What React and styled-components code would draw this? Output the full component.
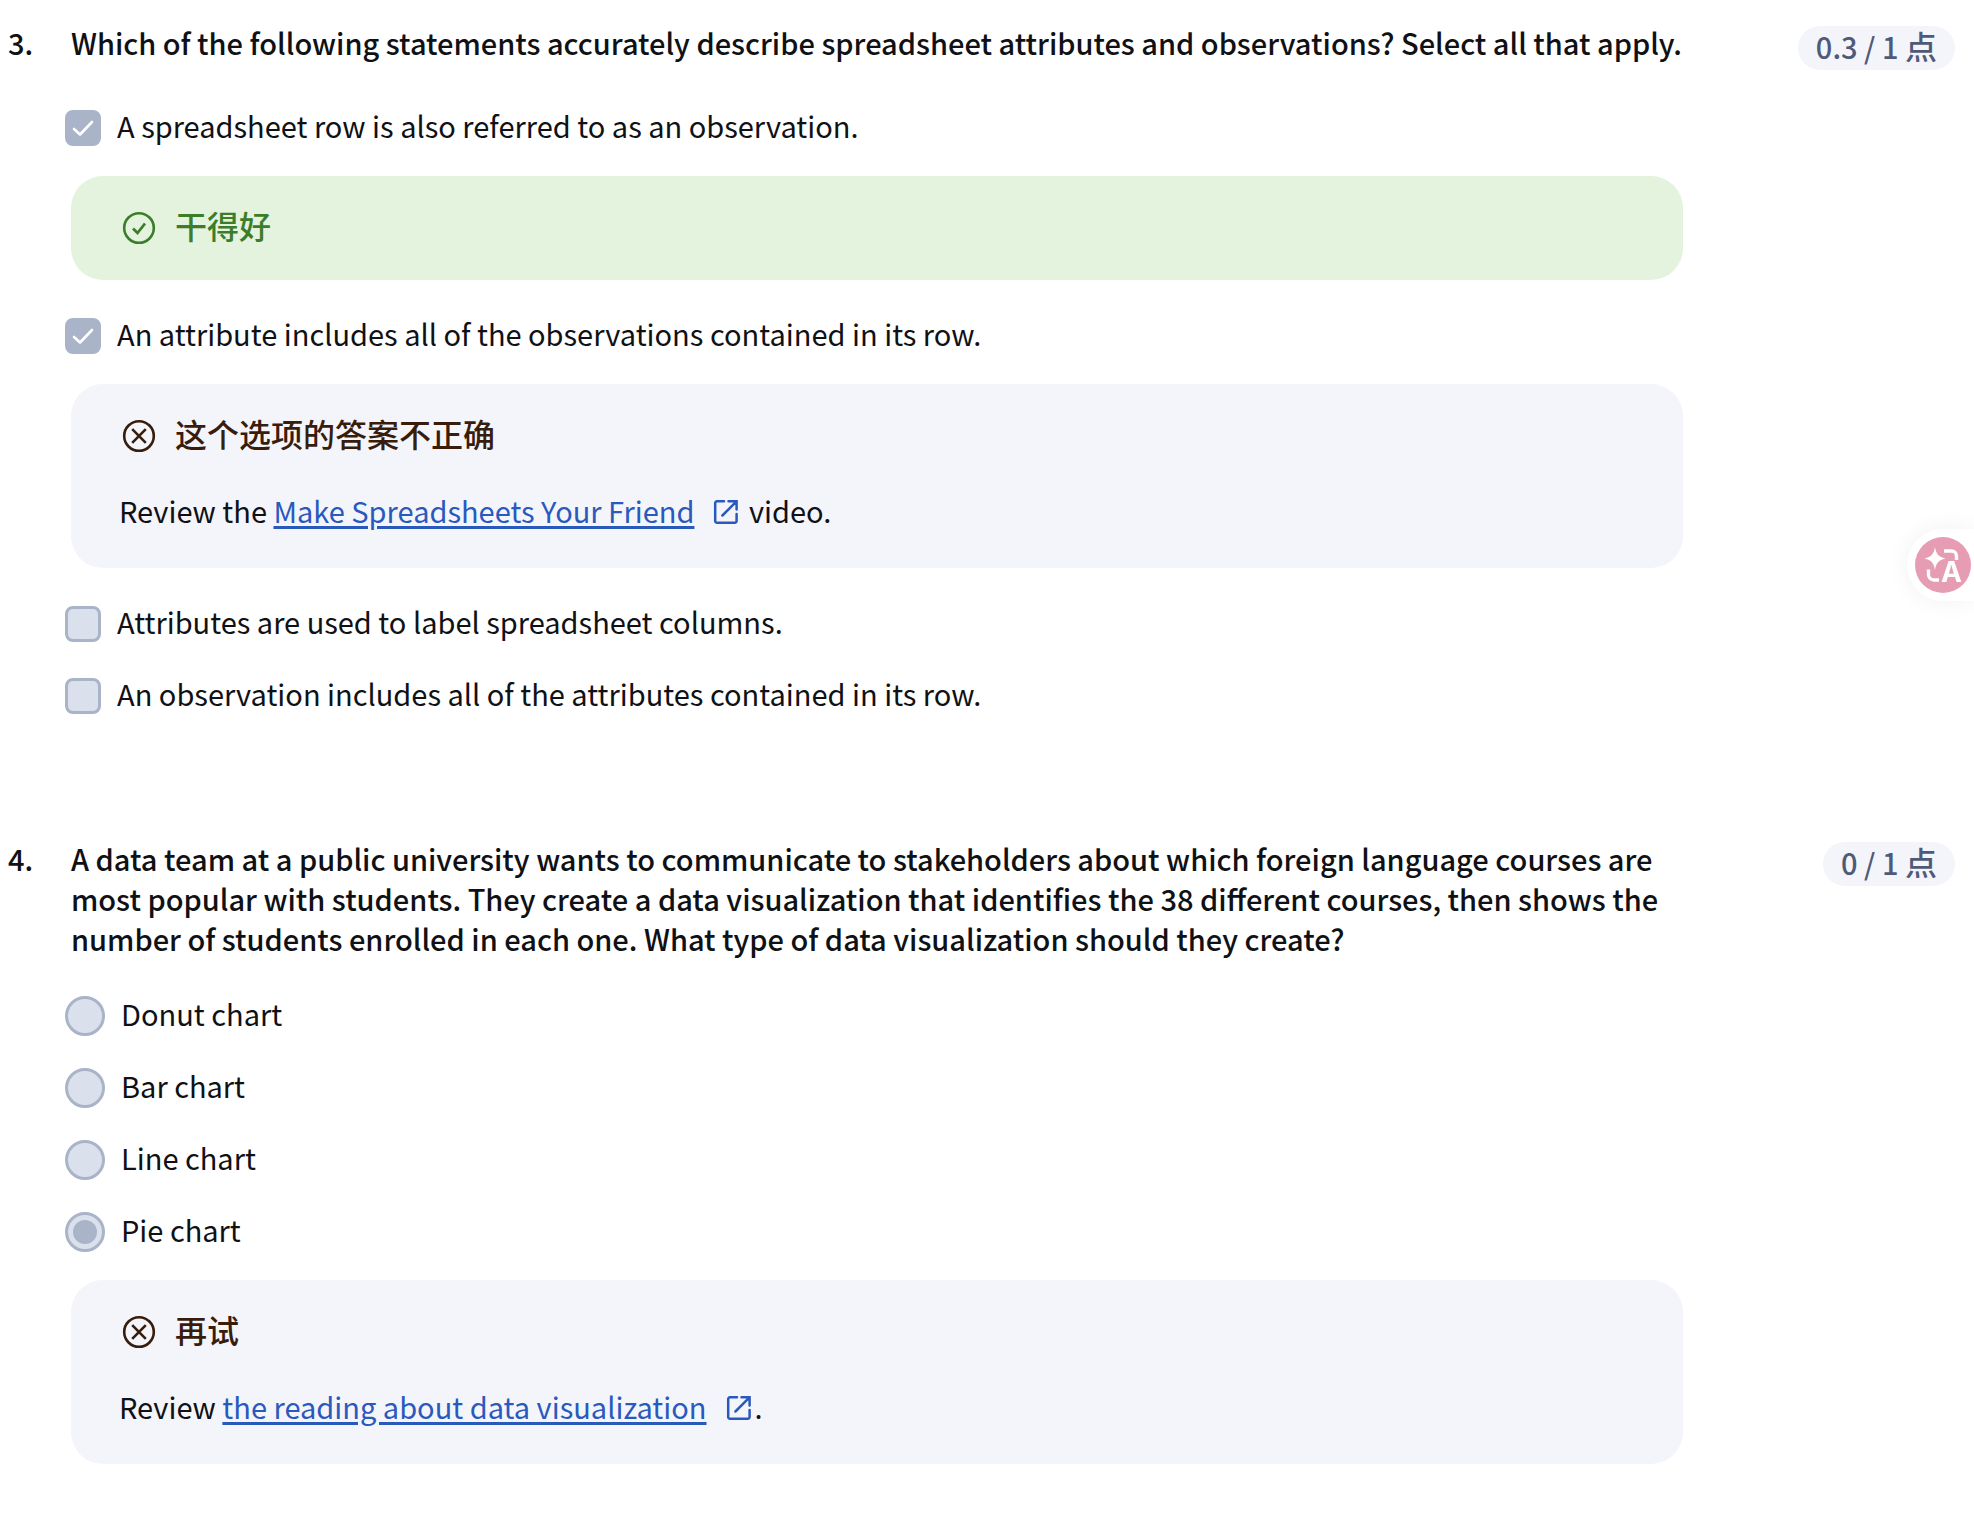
import React from 'react';
import styled, { createGlobalStyle, ThemeProvider } from 'styled-components';

const theme = {
  colors: {
    text: '#0f1114',
    link: '#2a59be',
    control: '#a9b4c8',
    controlFill: '#dae1ed',
    panel: '#f4f5fa',
    score: '#4f5a78',
    success: '#3c7d2a',
    successPanel: '#e4f3de',
    error: '#381c0c',
    pink: '#e69cb3'
  }
};

const GlobalStyle = createGlobalStyle`
  *,
  *::before,
  *::after {
    box-sizing: border-box;
  }

  body {
    margin: 0;
    background-color: #fff;
    color: ${theme.colors.text};
    font-family: 'Noto Sans CJK SC', 'Noto Sans', sans-serif;
    font-size: 29px;
    line-height: 40px;
  }
`;

const Page = styled.main`
  display: flex;
  flex-direction: column;
  gap: 106px;
  padding: 22px 19px 68px 8px;
`;

const QuestionWrap = styled.section`
  display: grid;
  grid-template-columns: 57px minmax(0, 1fr) 272px;
  align-items: start;
`;

const Number = styled.span`
  font-weight: 500;
`;

const Prompt = styled.h2`
  margin: 0;
  padding-left: 6px;
  font-size: 29px;
  font-weight: 500;
`;

const ScoreCell = styled.div`
  display: flex;
  justify-content: flex-end;
  padding-top: 4px;
`;

const Score = styled.span`
  height: 44px;
  padding: 0 18px;
  border-radius: 22px;
  background-color: ${props => props.theme.colors.panel};
  color: ${props => props.theme.colors.score};
  font-weight: 500;
  line-height: 38px;
  white-space: nowrap;
`;

const ScoreUnit = styled.span`
  font-size: 32px;
`;

const Options = styled.fieldset`
  min-width: 0;
  margin: ${props => (props.$type === 'radio' ? '22px' : '30px')} 0 0;
  padding: 0;
  border: 0;
`;

const OptionLabel = styled.label`
  display: flex;
  align-items: center;
  gap: 16px;
  min-height: 72px;
`;

const OptionText = styled.span`
  padding-bottom: 6px;
`;

const Checkbox = styled.input`
  appearance: none;
  flex: none;
  width: 36px;
  height: 36px;
  margin: 0;
  border: 3px solid ${props => props.theme.colors.control};
  border-radius: 8px;
  background-color: ${props => props.theme.colors.controlFill};
`;

const CheckboxWrap = styled.span`
  display: grid;
  flex: none;

  > * {
    grid-area: 1 / 1;
  }

  input:checked {
    background-color: ${props => props.theme.colors.control};
  }
`;

const Radio = styled.input`
  appearance: none;
  display: grid;
  flex: none;
  place-content: center;
  width: 40px;
  height: 40px;
  margin: 0;
  border: 3px solid ${props => props.theme.colors.control};
  border-radius: 50%;
  background-color: ${props => props.theme.colors.controlFill};

  &:checked::before {
    content: '';
    width: 24px;
    height: 24px;
    border-radius: 50%;
    background-color: ${props => props.theme.colors.control};
  }
`;

const Panel = styled.div`
  margin: 12px 0 20px 6px;
  padding: 32px 48px;
  border-radius: 32px;
  background-color: ${props =>
    props.$correct ? props.theme.colors.successPanel : props.theme.colors.panel};
`;

const PanelHeading = styled.div`
  display: flex;
  align-items: center;
  gap: 16px;
  height: 40px;
  color: ${props =>
    props.$correct ? props.theme.colors.success : props.theme.colors.error};
  font-size: 32px;
  font-weight: 500;
`;

const PanelTitle = styled.span`
  padding-bottom: 6px;
`;

const PanelText = styled.p`
  margin: 30px 0 2px;
  line-height: 48px;
`;

const Link = styled.a`
  color: ${props => props.theme.colors.link};
  text-decoration: none;
`;

const LinkText = styled.span`
  text-decoration: underline;
  text-decoration-thickness: 3px;
  text-underline-offset: 3px;
`;

const ExternalIcon = styled.svg`
  width: 32px;
  height: 32px;
  margin-left: 16px;
  vertical-align: -5px;
`;

const TranslateButton = styled.button`
  position: fixed;
  top: 529px;
  right: 0;
  height: 72px;
  padding: 8px 3px 8px 8px;
  border: 0;
  border-radius: 36px 0 0 36px;
  background-color: #fff;
  box-shadow: 0 0 24px rgba(0, 0, 0, 0.06);
`;

const TranslateIcon = styled.svg`
  display: block;
  width: 56px;
  height: 56px;
`;

const CheckMark = () => (
  <svg width="36" height="36" viewBox="0 0 36 36" fill="none" pointerEvents="none">
    <path
      d="M9 19l6 5.500L27 12"
      stroke="#fff"
      strokeWidth="2.6"
      strokeLinecap="round"
      strokeLinejoin="round"
    />
  </svg>
);

const StatusIcon = ({ correct }) => (
  <svg width="40" height="40" viewBox="0 0 40 40" fill="none" stroke="currentColor" aria-hidden="true">
    <circle cx="20" cy="20" r="14.8" strokeWidth="2.6" />
    {correct ? (
      <path d="M14 20.500l4.500 4.500L26 15.500" strokeWidth="2.8" />
    ) : (
      <path d="M13.200 13.200l13.600 13.600M26.800 13.200L13.200 26.800" strokeWidth="2.6" />
    )}
  </svg>
);

const ExternalLink = ({ children }) => (
  <Link href="#">
    <LinkText>{children}</LinkText>
    <ExternalIcon viewBox="0 0 32 32" fill="none" stroke="currentColor" strokeWidth="2.5" aria-hidden="true">
      <path
        d="M14 5.300H7a1.800 1.800 0 0 0-1.800 1.800v17.800a1.800 1.800 0 0 0 1.800 1.800h17.800a1.800 1.800 0 0 0 1.800-1.800V18"
        strokeLinecap="round"
      />
      <path d="M12.400 19.500L26 5.900M18.500 5.300h8.100v8.100" strokeLinecap="round" />
    </ExternalIcon>
  </Link>
);

const Feedback = ({ correct, title, children }) => (
  <Panel $correct={correct}>
    <PanelHeading $correct={correct}>
      <StatusIcon correct={correct} />
      <PanelTitle>{title}</PanelTitle>
    </PanelHeading>
    {children && <PanelText>{children}</PanelText>}
  </Panel>
);

const Option = ({ type, name, label, checked }) => (
  <OptionLabel>
    {type === 'radio' ? (
      <Radio type="radio" name={name} defaultChecked={checked} />
    ) : (
      <CheckboxWrap>
        <Checkbox type="checkbox" name={name} checked={!!checked} readOnly />
        {checked && <CheckMark />}
      </CheckboxWrap>
    )}
    <OptionText>{label}</OptionText>
  </OptionLabel>
);

const Question = ({ number, prompt, score, type, options }) => (
  <QuestionWrap>
    <Number>{number}.</Number>
    <div>
      <Prompt id={`prompt-${number}`}>{prompt}</Prompt>
      <Options $type={type} aria-labelledby={`prompt-${number}`}>
        {options.map(({ feedback, ...option }) => (
          <React.Fragment key={option.label}>
            <Option type={type} name={`question-${number}`} {...option} />
            {feedback}
          </React.Fragment>
        ))}
      </Options>
    </div>
    <ScoreCell>
      <Score>
        {score} / 1 <ScoreUnit>点</ScoreUnit>
      </Score>
    </ScoreCell>
  </QuestionWrap>
);

const questions = [
  {
    number: 3,
    type: 'checkbox',
    score: '0.3',
    prompt:
      'Which of the following statements accurately describe spreadsheet attributes and observations? Select all that apply.',
    options: [
      {
        label: 'A spreadsheet row is also referred to as an observation.',
        checked: true,
        feedback: <Feedback correct title="干得好" />
      },
      {
        label: 'An attribute includes all of the observations contained in its row.',
        checked: true,
        feedback: (
          <Feedback title="这个选项的答案不正确">
            Review the <ExternalLink>Make Spreadsheets Your Friend</ExternalLink> video.
          </Feedback>
        )
      },
      { label: 'Attributes are used to label spreadsheet columns.' },
      { label: 'An observation includes all of the attributes contained in its row.' }
    ]
  },
  {
    number: 4,
    type: 'radio',
    score: '0',
    prompt:
      'A data team at a public university wants to communicate to stakeholders about which foreign language courses are most popular with students. They create a data visualization that identifies the 38 different courses, then shows the number of students enrolled in each one. What type of data visualization should they create?',
    options: [
      { label: 'Donut chart' },
      { label: 'Bar chart' },
      { label: 'Line chart' },
      {
        label: 'Pie chart',
        checked: true,
        feedback: (
          <Feedback title="再试">
            Review <ExternalLink>the reading about data visualization</ExternalLink>.
          </Feedback>
        )
      }
    ]
  }
];

const App = () => (
  <ThemeProvider theme={theme}>
    <GlobalStyle />
    <Page>
      {questions.map(question => (
        <Question key={question.number} {...question} />
      ))}
    </Page>
    <TranslateButton type="button" aria-label="Translate">
      <TranslateIcon viewBox="0 0 56 56" fill="none">
        <circle cx="28" cy="28" r="28" fill={theme.colors.pink} />
        <path
          d="M20 10c1.200 7 3.500 9.800 10.500 11.500C23.500 23.200 21.200 26 20 33c-1.200-7-3.500-9.800-10.500-11.500C16.500 19.800 18.800 17 20 10z"
          fill="#fff"
        />
        <path
          d="M29 14h7.500a5 5 0 0 1 5 5V23M13.500 32.500v5a5.500 5.500 0 0 0 5.500 5.500h5"
          stroke="#fff"
          strokeWidth="3.4"
        />
        <text x="36.500" y="45" textAnchor="middle" fill="#fff" fontFamily="Inter, sans-serif" fontWeight="700" fontSize="28">
          A
        </text>
      </TranslateIcon>
    </TranslateButton>
  </ThemeProvider>
);

export default App;
